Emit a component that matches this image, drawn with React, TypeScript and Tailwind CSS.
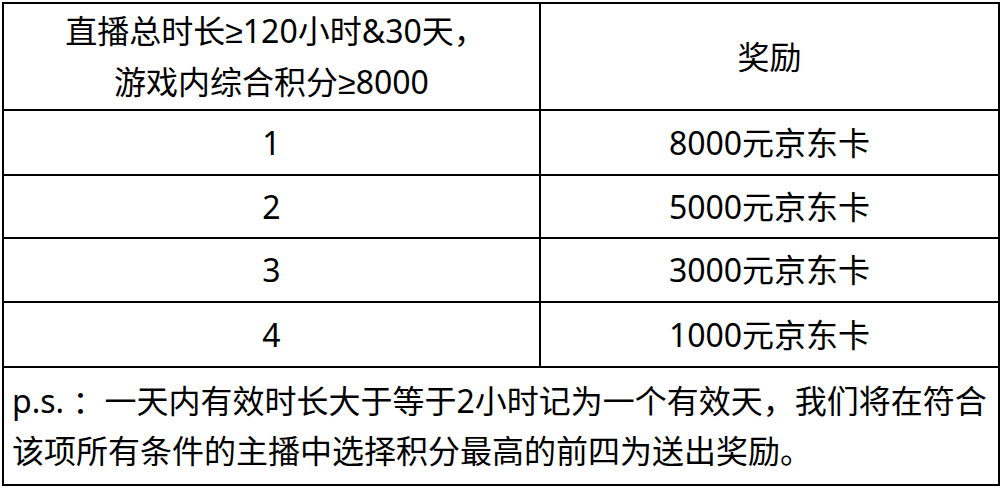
const rows = [
  { rank: "1", prize: "8000元京东卡", h: "h-[65px]" },
  { rank: "2", prize: "5000元京东卡", h: "h-[63px]" },
  { rank: "3", prize: "3000元京东卡", h: "h-[64px]" },
  { rank: "4", prize: "1000元京东卡", h: "h-[65px]" },
];

function Ge() {
  return <span className="font-['DejaVu_Sans',sans-serif] font-light">≥</span>;
}

export default function App() {
  return (
    <div className="w-[1002px] h-[488px] bg-white p-[2px] text-black font-['Noto_Sans','Noto_Sans_CJK_SC',sans-serif] text-[32px] leading-[50px]">
      <div className="w-[998px] h-[484px] border-2 border-black flex flex-col">
        <div className="grid grid-cols-[537px_1fr] h-[107px] border-b-2 border-black">
          <div className="border-r-2 border-black flex flex-col items-center justify-center">
            <span className="pl-2">
              直播总时长<Ge />120小时&amp;30天，
            </span>
            <span>
              游戏内综合积分<Ge />8000
            </span>
          </div>
          <div className="flex items-center justify-center">奖励</div>
        </div>
        {rows.map((r) => (
          <div key={r.rank} className={`grid grid-cols-[537px_1fr] border-b-2 border-black ${r.h}`}>
            <div className="border-r-2 border-black flex items-center justify-center">{r.rank}</div>
            <div className="flex items-center justify-center">{r.prize}</div>
          </div>
        ))}
        <div className="flex-1 flex flex-col justify-center pl-2 whitespace-nowrap">
          <span>p.s.&nbsp;：一天内有效时长大于等于2小时记为一个有效天，我们将在符合</span>
          <span>该项所有条件的主播中选择积分最高的前四为送出奖励。</span>
        </div>
      </div>
    </div>
  );
}
